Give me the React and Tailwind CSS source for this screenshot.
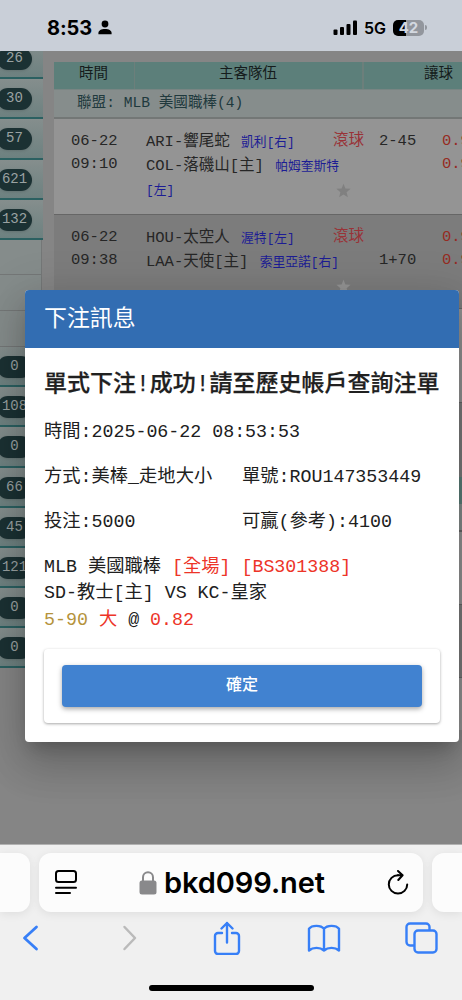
import { clsx } from 'clsx'

const MONO = "font-['Liberation_Mono','Noto_Sans_CJK_TC',monospace]"

const sidebar = [
  { count: '26' },
  { count: '30' },
  { count: '57' },
  { count: '621' },
  { count: '132' },
  { empty: true, h: 'h-[35px]' },
  { empty: true, h: 'h-[36px]' },
  { empty: true, h: 'h-[36px]' },
  { count: '0' },
  { count: '108' },
  { count: '0' },
  { count: '66' },
  { count: '45' },
  { count: '121' },
  { count: '0' },
  { count: '0' },
]

function StatusBar() {
  return (
    <header className="flex h-[51px] shrink-0 items-center justify-between bg-[#c9cfd8] pt-[4px] pr-[35px] pl-[47px] font-['Inter',sans-serif] text-black">
      <div className="flex items-center gap-[6px]">
        <span className="text-[20px] leading-none font-bold tracking-[-0.1px]">8:53</span>
        <svg width="14" height="15" viewBox="0 0 14 15" fill="currentColor">
          <circle cx="7" cy="4" r="3.4" />
          <path d="M0.4 14.2V13C0.4 10.4 3.2 8.9 7 8.9s6.6 1.5 6.6 4.1v1.2z" />
        </svg>
      </div>
      <div className="flex items-center">
        <svg width="25" height="16" viewBox="0 0 25 16" fill="currentColor">
          <rect x="0.5" y="9.5" width="4" height="5.5" rx="1" />
          <rect x="7" y="7" width="4" height="8" rx="1" />
          <rect x="13.5" y="4" width="4" height="11" rx="1" />
          <rect x="20" y="0.5" width="4" height="14.5" rx="1" />
        </svg>
        <span className="ml-[6px] text-[16px] leading-none font-semibold">5G</span>
        <div className="ml-[7px] flex h-4 w-[31px] items-center justify-center rounded-[5px] bg-linear-to-r from-black from-42% to-[#92969d] to-42% text-[15px] leading-none font-bold text-[#d3d8e0]">
          42
        </div>
        <span className="ml-px h-[5px] w-[2px] rounded-r-full bg-[#92969d]" />
      </div>
    </header>
  )
}

function Sidebar() {
  return (
    <aside className="w-[43px] shrink-0 overflow-hidden">
      <div className="-mt-[12px]">
        {sidebar.map((item, i) =>
          item.empty ? (
            <div key={i} className={clsx('w-[42px] border-r border-b border-[#747777] bg-[#858c8b]', item.h)} />
          ) : (
            <div
              key={i}
              className="h-[40.2px] border-b-2 border-[#2b6061] bg-linear-to-b from-[#858e8d] to-[#6d8180] pt-[9px]"
            >
              <div className="-ml-[3px] flex h-[22px] w-[35px] items-center justify-center rounded-full bg-[#1b3133] pb-[2px] text-[14px] leading-none text-[#9aa2a2] shadow-sm">
                {item.count}
              </div>
            </div>
          )
        )}
      </div>
    </aside>
  )
}

function Star({ className }) {
  return (
    <svg className={className} width="15" height="15" viewBox="0 0 24 24" fill="currentColor">
      <path d="M12 1l3.1 7.7 8.2.6-6.3 5.3 2 8.1-7-4.4-7 4.4 2-8.1L.7 9.3l8.2-.6z" />
    </svg>
  )
}

function Pitcher({ children }) {
  return <span className="ml-[2px] text-[12.8px] text-[#1c1c94]">{children}</span>
}

function Match({ time, home, homePitcher, away, awayPitcher, awayHand, line1, line2, starClass, className }) {
  return (
    <div className={clsx('flex pt-[11px] text-[15.5px] leading-[23px] text-[#262626]', className)}>
      <div className="w-[92px] shrink-0 pl-[17px]">
        <div>06-22</div>
        <div>{time}</div>
      </div>
      <div className="w-[198px] shrink-0 leading-[24px] whitespace-nowrap">
        <div className="h-6">
          {home} <Pitcher>{homePitcher}</Pitcher>
        </div>
        <div className="h-6">
          {away} <Pitcher>{awayPitcher}</Pitcher>
        </div>
        {awayHand && (
          <div className="-ml-[2px] h-6">
            <Pitcher>{awayHand}</Pitcher>
          </div>
        )}
      </div>
      <div className="-ml-[11px] w-[38px] shrink-0 whitespace-nowrap text-[#993237]">
        <div>滾球</div>
        <div className="mt-[30px] pl-[3px]">
          <Star className={starClass} />
        </div>
      </div>
      <div className="w-[71px] shrink-0 pl-2">
        <div className="h-[23px]">{line1}</div>
        <div>{line2}</div>
      </div>
      <div className="text-[#962b22]">
        <div>0.90</div>
        <div>0.90</div>
      </div>
    </div>
  )
}

function OddsTable() {
  return (
    <main className="ml-[11px] w-[408px] shrink-0 overflow-hidden pt-[11px]">
      <div className="flex h-[27px] bg-[#5c7f7a] text-[14.5px] leading-[25px] text-[#151c1c]">
        <div className="w-[81px] border-r border-[#6c7f7b] pr-px text-center">時間</div>
        <div className="w-[229px] border-r-2 border-[#6c7f7b] pr-px text-center">主客隊伍</div>
        <div className="pl-[60px] whitespace-nowrap">讓球</div>
      </div>
      <div className="h-[30px] border-t border-b-2 border-t-[#788583] border-b-[#737776] bg-[#868d8c] pl-[23px] text-[14.6px] leading-[26px] text-[#20393d]">
        聯盟: MLB 美國職棒(4)
      </div>
      <Match
        time="09:10"
        home="ARI-響尾蛇"
        homePitcher="凱利[右]"
        away="COL-落磯山[主]"
        awayPitcher="帕姆奎斯特"
        awayHand="[左]"
        line1="2-45"
        starClass="text-[#808080]"
        className="h-[95px] bg-[#949494]"
      />
      <Match
        time="09:38"
        home="HOU-太空人"
        homePitcher="渥特[左]"
        away="LAA-天使[主]"
        awayPitcher="索里亞諾[右]"
        line2="1+70"
        starClass="text-[#949494]"
        className="h-[94px] border-t border-[#666] bg-[#7c7c7c]"
      />
      <div className="h-[94px] border-t border-[#666] bg-[#949494]" />
      <div className="h-[75px] border-t border-[#666] bg-[#7c7c7c]" />
      <div className="h-[27px] bg-[#5c7f7a]" />
      <div className="h-[28px] border-b-2 border-[#666] bg-[#868d8c]" />
      <div className="h-[72px] bg-[#949494]" />
      <div className="h-[73px] border-t border-[#666] bg-[#7c7c7c]" />
      <div className="h-[53px] border-t border-[#666] bg-[#949494]" />
    </main>
  )
}

function BetDialog() {
  return (
    <section
      role="dialog"
      className="absolute top-[239px] left-[25px] h-[451.5px] w-[434px] overflow-hidden rounded bg-white text-[18.3px] text-[#202020] shadow-[0_11px_15px_-7px_rgba(0,0,0,.2),0_24px_38px_3px_rgba(0,0,0,.14),0_9px_46px_8px_rgba(0,0,0,.12)]"
    >
      <h2 className="h-[57.5px] bg-[#326db2] pl-[19px] text-[22.9px] leading-[60px] text-white">下注訊息</h2>
      <div className="px-[19px] whitespace-nowrap">
        <h3 className="mt-[21.5px] text-[23px] leading-[32px] font-medium [-webkit-text-stroke:0.25px_#202020]">
          單式下注!成功!請至歷史帳戶查詢注單
        </h3>
        <p className="mt-[18px] leading-[27px]">時間:2025-06-22 08:53:53</p>
        <div className="mt-[18px] flex leading-[27px]">
          <p className="w-[198px]">方式:美棒_走地大小</p>
          <p>單號:ROU147353449</p>
        </div>
        <div className="mt-[18px] flex leading-[27px]">
          <p className="w-[198px]">投注:5000</p>
          <p>可贏(參考):4100</p>
        </div>
        <div className="mt-[17.5px] leading-[26.5px]">
          <p>
            MLB 美國職棒 <span className="text-[#ed3428]">[全場] [BS301388]</span>
          </p>
          <p>SD-教士[主] VS KC-皇家</p>
          <p>
            <span className="text-[#b5933b]">5-90</span> <span className="text-[#ed3428]">大</span> @{' '}
            <span className="text-[#ed3428]">0.82</span>
          </p>
        </div>
        <div className="mt-[16px] rounded-sm bg-white px-[18px] pt-4 pb-4 shadow-[0_1px_3px_rgba(0,0,0,.35)]">
          <button className="block h-[41.5px] w-full rounded bg-[#4182d0] text-[16px] leading-[38px] font-medium text-white shadow-[0_2px_5px_rgba(0,0,0,.35)]">
            確定
          </button>
        </div>
      </div>
    </section>
  )
}

function BrowserBar() {
  return (
    <footer className="h-[156px] shrink-0 border-t border-[#b2b2b2] bg-[#f0f0f0] pt-[8px]">
      <div className="flex h-[59px] gap-[9px]">
        <div className="w-[30px] rounded-r-xl bg-[#fcfcfc] shadow-[0_2px_10px_rgba(0,0,0,.08)]" />
        <div className="flex w-[384px] items-center rounded-xl bg-[#fcfcfc] pr-[14px] pl-[16px] shadow-[0_2px_10px_rgba(0,0,0,.08)]">
          <svg width="22" height="25" viewBox="0 0 22 25" fill="none" stroke="#000" strokeWidth="2" strokeLinecap="round">
            <rect x="1" y="1" width="20" height="11" rx="2.5" />
            <path d="M1 17.7h20M1 23h14" />
          </svg>
          <div className="flex flex-1 items-center justify-center">
            <svg width="18" height="24" viewBox="0 0 18 24">
              <rect x="0.5" y="9.5" width="17" height="14" rx="2.5" fill="#89898b" />
              <path d="M4 11V6.3a5 5 0 0 1 10 0V11" fill="none" stroke="#89898b" strokeWidth="2" />
            </svg>
            <span className="ml-[7px] font-['Inter',sans-serif] text-[29px] leading-none font-semibold tracking-[-0.1px] text-black">
              bkd099.net
            </span>
          </div>
          <svg width="22" height="25" viewBox="0 0 22 25" fill="none" stroke="#000" strokeWidth="2" strokeLinecap="round" strokeLinejoin="round">
            <path d="M11 5.2a9.2 9.2 0 1 0 9.2 9.2" />
            <path d="M11 5.3h4.5M11 1l4.6 4.3L11.3 10" />
          </svg>
        </div>
        <div className="flex-1 rounded-l-xl bg-[#fcfcfc] shadow-[0_2px_10px_rgba(0,0,0,.08)]" />
      </div>
      <nav className="-mx-[16px] grid h-[51px] grid-cols-[repeat(5,97px)] items-center justify-items-center text-[#377ff7]">
        <svg className="mr-[4px]" width="17" height="26" viewBox="0 0 17 26" fill="none" stroke="currentColor" strokeWidth="2.8" strokeLinecap="round" strokeLinejoin="round">
          <path d="M14.5 2L2.5 13l12 11" />
        </svg>
        <svg width="17" height="26" viewBox="0 0 17 26" fill="none" stroke="#bababa" strokeWidth="2.5" strokeLinecap="round" strokeLinejoin="round">
          <path d="M3.5 2l10.5 11-10.5 11" />
        </svg>
        <svg width="28" height="34" viewBox="0 0 28 34" fill="none" stroke="currentColor" strokeWidth="2.4" strokeLinecap="round" strokeLinejoin="round">
          <path d="M9 12H5a3 3 0 0 0-3 3v15a3 3 0 0 0 3 3h18a3 3 0 0 0 3-3V15a3 3 0 0 0-3-3h-4M14 21.500V2M8.500 7.500L14 2l5.500 5.500" />
        </svg>
        <svg width="34" height="28" viewBox="0 0 34 28" fill="none" stroke="currentColor" strokeWidth="2.4" strokeLinecap="round" strokeLinejoin="round">
          <path d="M17 4.800C14 1 5 .8 2 4.800V26.500c4-3.500 11-3.500 15 0 4-3.500 11-3.500 15 0V4.800C29 .8 20 1 17 4.800zM17 4.800v21.700" />
        </svg>
        <svg className="ml-[2px]" width="33" height="32" viewBox="0 0 33 32" fill="none" stroke="currentColor" strokeWidth="2.4" strokeLinejoin="round">
          <rect x="9.500" y="8.500" width="22" height="22" rx="3.500" />
          <path d="M9.500 23.500H5A3.500 3.500 0 0 1 1.500 20V5A3.500 3.500 0 0 1 5 1.500h16A3.500 3.500 0 0 1 24.500 5v3.500" />
        </svg>
      </nav>
      <div className="mx-auto mt-[22px] h-[6px] w-[165px] rounded-full bg-black" />
    </footer>
  )
}

export default function App() {
  return (
    <div className={clsx('flex h-[1000px] w-[462px] flex-col overflow-hidden', MONO)}>
      <StatusBar />
      <div className="relative flex min-h-0 flex-1 overflow-hidden bg-[#858585]">
        <Sidebar />
        <OddsTable />
        <BetDialog />
      </div>
      <BrowserBar />
    </div>
  )
}
